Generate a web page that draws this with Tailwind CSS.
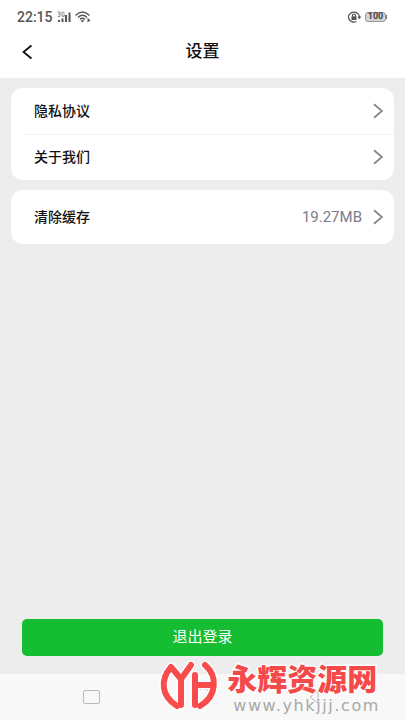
<!DOCTYPE html>
<html lang="zh-CN">
<head>
<meta charset="utf-8">
<meta name="viewport" content="width=device-width, initial-scale=1">
<title>设置</title>
<script src="https://cdn.jsdelivr.net/npm/@tailwindcss/browser@4"></script>
</head>
<body class="relative flex min-h-screen flex-col bg-[#ededed] font-['Roboto','Noto_Sans_CJK_SC',sans-serif] text-[#111]">
  <header class="bg-white">
    <div class="flex h-8 items-center justify-between pt-0.5 pr-[18px] pl-[17px] text-[#555]">
      <div class="flex items-center gap-1">
        <span class="text-sm font-medium">22:15</span>
        <svg class="h-3 w-3.5" viewBox="0 0 14 12" fill="#555" aria-hidden="true">
          <path d="M1 9h2v2H1zM4.500 7.500h2V11h-2zM8 4h2v7H8zM11.500 1.500h2V11h-2z"/>
          <path d="M.5 1H3v4.500H.5M1 3h2M7.500 1.300H5v4h2.300V3.300H6.300" fill="none" stroke="#777" stroke-width=".8"/>
        </svg>
        <svg class="h-3 w-4" viewBox="0 0 16 12" fill="none" stroke="#555" stroke-width="1.400" aria-hidden="true">
          <path d="M.5 4.500Q7.500-2.300 14.500 4.500M3 6.500q4.500-4.400 9 0M5 8.500q2.500-2.400 5 0"/>
          <circle cx="7.500" cy="10" r="1.200" fill="#555" stroke="none"/>
          <path d="M12.500 7 15.500 9.200l-3 2.200z" fill="#555" stroke="none"/>
        </svg>
      </div>
      <div class="flex items-center gap-1">
        <svg class="h-3 w-3.5" viewBox="0 0 14 12" fill="none" stroke="#555" stroke-width="1.200" aria-hidden="true">
          <path d="M9.500 10.500A5.500 5 0 1 1 12.400 7M11 5.600l1.400 1.600 1.300-1.700"/>
          <rect x="4.500" y="5.300" width="5" height="3.700" fill="#555" stroke="none"/>
          <path d="M5.500 5.500V4.300a1.500 1.300 0 0 1 3 0v1.200"/>
        </svg>
        <div class="flex items-center">
          <span class="flex h-2.5 w-[21px] items-center justify-center rounded-[3px] border border-[#999] bg-[#d4d4d4] text-[9px] font-bold text-[#444]">100</span>
          <span class="h-1 w-px bg-[#777]"></span>
        </div>
      </div>
    </div>
    <div class="grid h-[46px] grid-cols-[1fr_auto_1fr] items-center pb-1.5">
      <button class="w-14 py-2 pl-[22px]" aria-label="返回">
        <svg class="h-4 w-3" viewBox="0 0 12 16" fill="none" stroke="#111" stroke-width="1.800" aria-hidden="true"><path d="M9.500 1.500 1.500 8l8 6.500"/></svg>
      </button>
      <h1 class="text-[17px] font-medium">设置</h1>
    </div>
  </header>

  <main class="flex flex-1 flex-col px-[11px] pt-[10px]">
    <nav class="overflow-hidden rounded-xl bg-white">
      <a href="#privacy" class="flex h-[46px] items-center justify-between pr-[11px] pl-[23px]">
        <span class="text-sm font-medium">隐私协议</span>
        <svg class="h-4 w-2.5" viewBox="0 0 10 16" fill="none" stroke="#85858f" stroke-width="1.800" aria-hidden="true"><path d="M1 1.200 9 8l-8 6.800"/></svg>
      </a>
      <a href="#about" class="relative flex h-[46px] items-center justify-between pr-[11px] pl-[23px] before:absolute before:top-0 before:right-0 before:left-3 before:h-px before:bg-[#f3f3f3]">
        <span class="text-sm font-medium">关于我们</span>
        <svg class="h-4 w-2.5" viewBox="0 0 10 16" fill="none" stroke="#85858f" stroke-width="1.800" aria-hidden="true"><path d="M1 1.200 9 8l-8 6.800"/></svg>
      </a>
    </nav>
    <button class="mt-[10px] flex h-[54px] items-center rounded-xl bg-white pr-[11px] pl-[23px]">
      <span class="text-sm font-medium">清除缓存</span>
      <span class="mr-[11px] ml-auto text-[15px] text-[#7b7b87]">19.27MB</span>
      <svg class="h-4 w-2.5" viewBox="0 0 10 16" fill="none" stroke="#85858f" stroke-width="1.800" aria-hidden="true"><path d="M1 1.200 9 8l-8 6.800"/></svg>
    </button>
    <button class="mx-[11px] mt-auto mb-[18px] h-[37px] rounded-[5px] bg-[#14bd31] text-[15px] text-white">退出登录</button>
  </main>

  <footer class="grid h-[46px] grid-cols-3 items-center bg-[#f8f8f8] px-9">
    <button class="mx-auto h-[14px] w-[17px] rounded-xs border border-[#bbb]" aria-label="最近任务"></button>
    <button class="mx-auto size-[18px] rounded-full border border-[#999]" aria-label="主页"></button>
    <button class="mx-auto" aria-label="返回上一页"><svg class="size-4" viewBox="0 0 16 16" fill="none" stroke="#bbb" aria-hidden="true"><path d="M12 2 4 8l8 6z"/></svg></button>
  </footer>

  <div class="pointer-events-none absolute right-[25px] bottom-1 flex items-start gap-2 opacity-90">
    <svg class="h-[52px] w-[60px]" viewBox="0 0 60 52" fill="none" stroke-linecap="round" stroke-linejoin="round" aria-hidden="true">
      <path stroke="#fff" stroke-width="9" d="M18 46C2 36 1 20 12 7l10 12L32 5M22 19v26M36 15v30M36 25h17M46 5c13 11 12 31-5 41"/>
      <path stroke="#fa3a3a" stroke-width="6" d="M18 46C2 36 1 20 12 7l10 12L32 5M22 19v26M36 15v30M36 25h17M46 5c13 11 12 31-5 41"/>
    </svg>
    <div class="pt-1">
      <p class="text-[30px] leading-8 font-black text-[#f43838] [-webkit-text-stroke:3px_white] [paint-order:stroke_fill]">永辉资源网</p>
      <p class="pl-1.5 font-['DejaVu_Sans',sans-serif] text-base leading-5 tracking-widest text-[#a0a0a0]">www.yhkjjj.com</p>
    </div>
  </div>
</body>
</html>
